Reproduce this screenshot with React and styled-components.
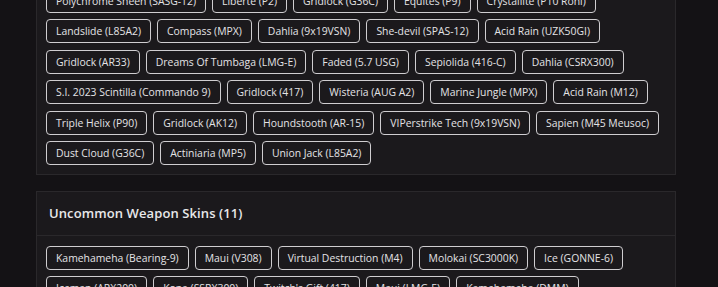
import React from 'react'
import styled, { createGlobalStyle } from 'styled-components'

const GlobalStyle = createGlobalStyle`
  html, body {
    margin: 0;
    padding: 0;
    background: #141215;
    overflow: hidden;
  }
  body {
    font-family: "Open Sans", "Liberation Sans", sans-serif;
    color: #e6e6e6;
  }
`

// Styled Components
const Page = styled.div`
  width: 640px;
  margin: -22px 0 0 36px;
  display: flex;
  flex-direction: column;
  gap: 16px;
`
const Card = styled.section`
  background: #1b191c;
  border: 1px solid #2a282b;
`
const CardHeader = styled.div`
  height: 43px;
  display: flex;
  align-items: center;
  padding: 0 12px;
  border-bottom: 1px solid #2a282b;
`
const Title = styled.h3`
  margin: 0;
  font-size: 13px;
  font-weight: 600;
  color: #e8e8ea;
  letter-spacing: 0.1px;
`
const ChipList = styled.div`
  display: flex;
  flex-wrap: wrap;
  gap: 6.4px 6px;
  padding: 10px 9px 9px;
`
const Chip = styled.div`
  box-sizing: border-box;
  height: 24px;
  display: flex;
  align-items: center;
  padding: 0 9px;
  border: 1px solid #cfcdd0;
  border-radius: 4px;
  font-size: 10.4px;
  color: #e4e3e6;
  white-space: nowrap;
`

const rareSkins = [
  'Polychrome Sheen (SASG-12)', 'Liberte (P2)', 'Gridlock (G36C)', 'Equites (P9)', 'Crystallite (P10 Roni)',
  'Landslide (L85A2)', 'Compass (MPX)', 'Dahlia (9x19VSN)', 'She-devil (SPAS-12)', 'Acid Rain (UZK50GI)',
  'Gridlock (AR33)', 'Dreams Of Tumbaga (LMG-E)', 'Faded (5.7 USG)', 'Sepiolida (416-C)', 'Dahlia (CSRX300)',
  'S.I. 2023 Scintilla (Commando 9)', 'Gridlock (417)', 'Wisteria (AUG A2)', 'Marine Jungle (MPX)', 'Acid Rain (M12)',
  'Triple Helix (P90)', 'Gridlock (AK12)', 'Houndstooth (AR-15)', 'VIPerstrike Tech (9x19VSN)', 'Sapien (M45 Meusoc)',
  'Dust Cloud (G36C)', 'Actiniaria (MP5)', 'Union Jack (L85A2)',
]

const uncommonSkins = [
  'Kamehameha (Bearing-9)', 'Maui (V308)', 'Virtual Destruction (M4)', 'Molokai (SC3000K)', 'Ice (GONNE-6)',
  'Iceman (ARX200)', 'Kona (SSRX300)', "Twitch's Gift (417)", 'Maui (LMG-E)', 'Kamehameha (DMM)',
  'Molokai (SPSMG9)',
]

const App = () => {
  return (
    <>
      <GlobalStyle />
      <Page>
        <Card>
          <ChipList>
            {rareSkins.map(s => <Chip key={s}>{s}</Chip>)}
          </ChipList>
        </Card>
        <Card>
          <CardHeader>
            <Title>Uncommon Weapon Skins ({uncommonSkins.length})</Title>
          </CardHeader>
          <ChipList>
            {uncommonSkins.map(s => <Chip key={s}>{s}</Chip>)}
          </ChipList>
        </Card>
      </Page>
    </>
  )
}
export default App
